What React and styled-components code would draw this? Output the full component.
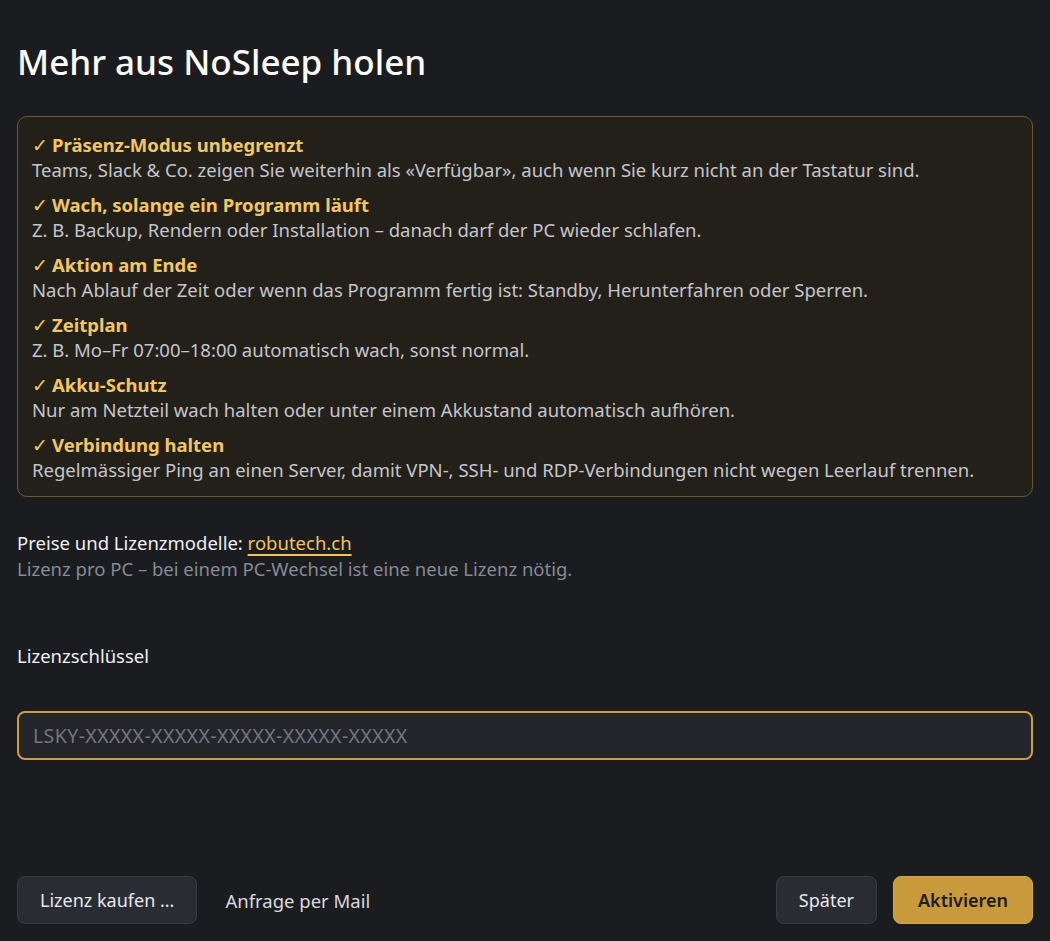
import React from "react";
import styled, { createGlobalStyle } from "styled-components";

const features = [
  {
    id: 1,
    title: "Präsenz-Modus unbegrenzt",
    text: "Teams, Slack & Co. zeigen Sie weiterhin als «Verfügbar», auch wenn Sie kurz nicht an der Tastatur sind.",
  },
  {
    id: 2,
    title: "Wach, solange ein Programm läuft",
    text: "Z. B. Backup, Rendern oder Installation – danach darf der PC wieder schlafen.",
  },
  {
    id: 3,
    title: "Aktion am Ende",
    text: "Nach Ablauf der Zeit oder wenn das Programm fertig ist: Standby, Herunterfahren oder Sperren.",
  },
  {
    id: 4,
    title: "Zeitplan",
    text: "Z. B. Mo–Fr 07:00–18:00 automatisch wach, sonst normal.",
  },
  {
    id: 5,
    title: "Akku-Schutz",
    text: "Nur am Netzteil wach halten oder unter einem Akkustand automatisch aufhören.",
  },
  {
    id: 6,
    title: "Verbindung halten",
    text: "Regelmässiger Ping an einen Server, damit VPN-, SSH- und RDP-Verbindungen nicht wegen Leerlauf trennen.",
  },
];

const App = () => {
  return (
    <>
      <GlobalStyle />
      <Page>
        <Title>Mehr aus NoSleep holen</Title>
        <FeatureBox>
          {features.map(({ id, title, text }) => (
            <Feature key={id}>
              <FeatureTitle>
                <Check>✓</Check>
                {title}
              </FeatureTitle>
              <FeatureText>{text}</FeatureText>
            </Feature>
          ))}
        </FeatureBox>

        <Pricing>
          <PriceLine>
            Preise und Lizenzmodelle: <Link href="#">robutech.ch</Link>
          </PriceLine>
          <Hint>Lizenz pro PC – bei einem PC-Wechsel ist eine neue Lizenz nötig.</Hint>
        </Pricing>

        <Label htmlFor="key">Lizenzschlüssel</Label>
        <KeyInput id="key" autoFocus placeholder="LSKY-XXXXX-XXXXX-XXXXX-XXXXX-XXXXX" />

        <Footer>
          <Button>Lizenz kaufen ...</Button>
          <TextButton>Anfrage per Mail</TextButton>
          <Spacer />
          <Button>Später</Button>
          <Button primary>Aktivieren</Button>
        </Footer>
      </Page>
    </>
  );
};
export default App;

const GlobalStyle = createGlobalStyle`
  html, body {
    margin: 0;
    padding: 0;
    background: #1b1c20;
  }
  body {
    font-family: "Noto Sans", "Open Sans", sans-serif;
    color: #e8e8ec;
  }
  * {
    box-sizing: border-box;
  }
`;

const Page = styled.div`
  width: 1050px;
  height: 941px;
  padding: 0 17px 17px;
  display: flex;
  flex-direction: column;
  background: #1b1c20;
`;

const Title = styled.h1`
  margin: 38px 0 0;
  font-size: 35px;
  line-height: 48px;
  font-weight: 500;
  color: #ffffff;
`;

const FeatureBox = styled.div`
  margin-top: 30px;
  border: 1px solid #6b5a2e;
  border-radius: 10px;
  background: #23201a;
  padding: 15px 14px 14px;
  display: flex;
  flex-direction: column;
  gap: 10px;
`;

const Feature = styled.div`
  display: flex;
  flex-direction: column;
`;

const FeatureTitle = styled.div`
  font-size: 18.5px;
  line-height: 25px;
  font-weight: 700;
  color: #f2c760;
`;

const Check = styled.span`
  font-weight: 400;
  margin-right: 4px;
`;

const FeatureText = styled.div`
  font-size: 18.5px;
  line-height: 25px;
  color: #c4c5cc;
`;

const Pricing = styled.div`
  margin-top: 33px;
  display: flex;
  flex-direction: column;
`;

const PriceLine = styled.div`
  font-size: 18.5px;
  line-height: 26px;
  color: #eeeef2;
`;

const Link = styled.a`
  color: #f0c45a;
  text-decoration: underline;
  text-decoration-thickness: 1.5px;
  text-underline-offset: 4px;
`;

const Hint = styled.div`
  font-size: 18.5px;
  line-height: 26px;
  color: #858a96;
`;

const Label = styled.label`
  margin-top: 61px;
  font-size: 18.5px;
  line-height: 26px;
  color: #eeeef2;
`;

const KeyInput = styled.input`
  margin-top: 42px;
  width: 100%;
  height: 49px;
  border: 2px solid #cc9f3c;
  border-radius: 8px;
  background: #24252b;
  padding: 0 14px;
  font-family: inherit;
  font-size: 19.5px;
  letter-spacing: 0.4px;
  color: #e8e8ec;
  outline: none;
  caret-color: #e0e0e0;
  &::placeholder {
    color: #72757e;
  }
`;

const Footer = styled.div`
  margin-top: auto;
  display: flex;
  align-items: center;
  gap: 16px;
`;

const Spacer = styled.div`
  flex: 1;
`;

const Button = styled.button`
  height: 48px;
  padding: 0 ${(p) => (p.primary ? "24px" : "22px")};
  border-radius: 8px;
  font-family: inherit;
  font-size: 18px;
  cursor: pointer;
  border: 1px solid ${(p) => (p.primary ? "#d7a847" : "#3a3c45")};
  background: ${(p) => (p.primary ? "#c99a3b" : "#2a2c33")};
  color: ${(p) => (p.primary ? "#1c1c1e" : "#e6e6ea")};
  font-weight: ${(p) => (p.primary ? 600 : 400)};
`;

const TextButton = styled.button`
  height: 48px;
  padding: 0 12px;
  border: none;
  background: transparent;
  font-family: inherit;
  font-size: 18.5px;
  color: #d8d8de;
  cursor: pointer;
`;
